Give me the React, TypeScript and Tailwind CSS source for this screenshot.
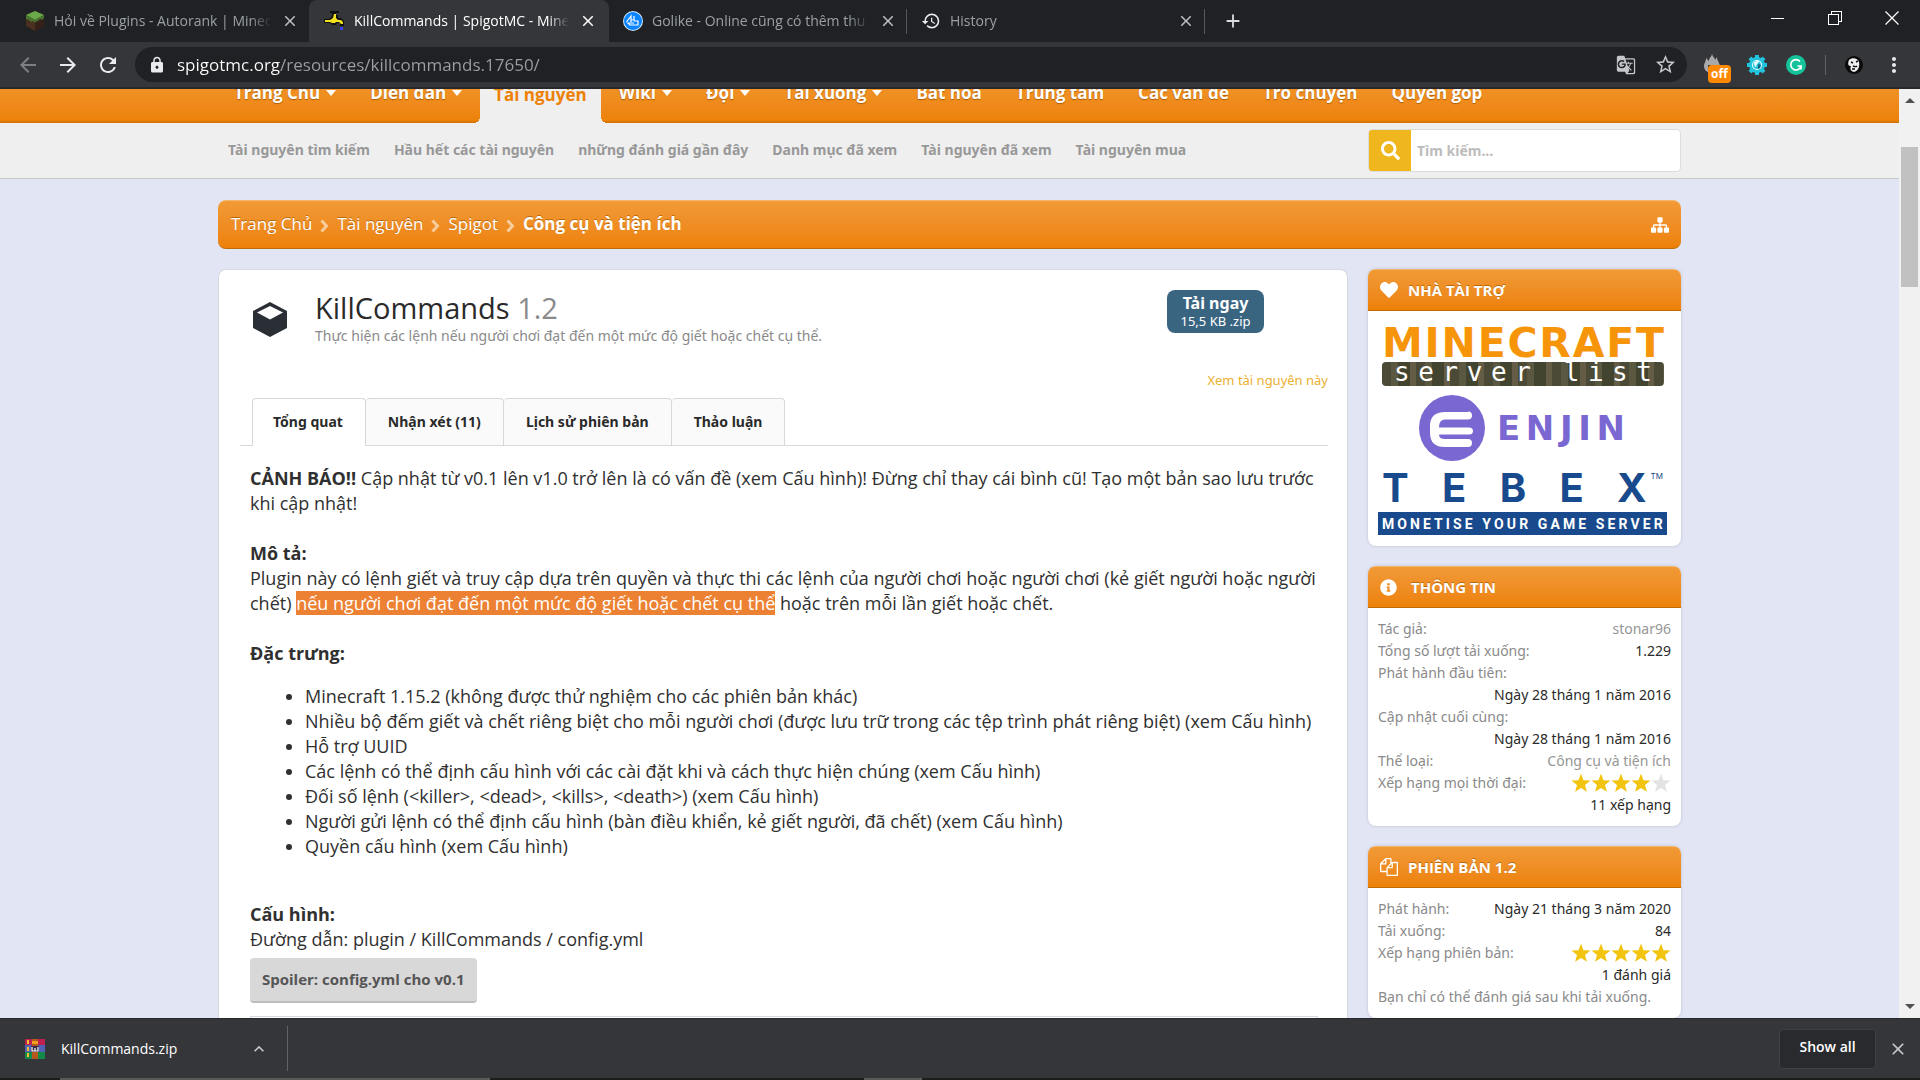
import type { ReactNode } from 'react';
import {
  MdAdd,
  MdArrowBack,
  MdArrowForward,
  MdClose,
  MdGTranslate,
  MdHistory,
  MdKeyboardArrowUp,
  MdLock,
  MdMoreVert,
  MdRefresh,
  MdStarBorder,
} from 'react-icons/md';
import { FaHeart, FaInfoCircle, FaSearch } from 'react-icons/fa';

const navItems = [
  { label: 'Trang Chủ', menu: true },
  { label: 'Diễn đàn', menu: true },
  { label: 'Tài nguyên', active: true },
  { label: 'Wiki', menu: true },
  { label: 'Đội', menu: true },
  { label: 'Tải xuống', menu: true },
  { label: 'Bất hòa' },
  { label: 'Trung tâm' },
  { label: 'Các vấn đề' },
  { label: 'Trò chuyện' },
  { label: 'Quyên góp' },
];

const subNav = [
  'Tài nguyên tìm kiếm',
  'Hầu hết các tài nguyên',
  'những đánh giá gần đây',
  'Danh mục đã xem',
  'Tài nguyên đã xem',
  'Tài nguyên mua',
];

const crumbs = ['Trang Chủ', 'Tài nguyên', 'Spigot'];

const resourceTabs = ['Tổng quat', 'Nhận xét (11)', 'Lịch sử phiên bản', 'Thảo luận'];

const features = [
  'Minecraft 1.15.2 (không được thử nghiệm cho các phiên bản khác)',
  'Nhiều bộ đếm giết và chết riêng biệt cho mỗi người chơi (được lưu trữ trong các tệp trình phát riêng biệt) (xem Cấu hình)',
  'Hỗ trợ UUID',
  'Các lệnh có thể định cấu hình với các cài đặt khi và cách thực hiện chúng (xem Cấu hình)',
  'Đối số lệnh (<killer>, <dead>, <kills>, <death>) (xem Cấu hình)',
  'Người gửi lệnh có thể định cấu hình (bàn điều khiển, kẻ giết người, đã chết) (xem Cấu hình)',
  'Quyền cấu hình (xem Cấu hình)',
];

/* ---------- small drawings ---------- */

const GrassBlock = () => (
  <svg viewBox="-1 0 20 20" className="size-5 shrink-0">
    <path d="M9 0 18 4v11l-9 5-9-5V4z" fill="#4a3020" />
    <path d="M9 9v11l9-5V4z" fill="#35211a" />
    <path d="M9 0 18 4 9 9 0 4z" fill="#6aa84a" />
    <path d="M0 4l9 5v3l-2-2-2 1-2-2-3-1zM18 4l-9 5v2l3-1 2-2 2 1 2-2z" fill="#47752f" />
  </svg>
);

const Faucet = () => (
  <svg viewBox="0 0 20 20" className="size-5 shrink-0">
    <path d="M6 0h9v2h-3v2h2v3h3l3 3v5h-4v-3h-3l-1 2H8l-2-2H0V8h5l3-3V2H6z" fill="#111" />
    <path d="M10 3h2v4l2 2h3l2 2v2h-2l-2-2h-3l-1 1H8l-2-1H1V9h5l3-2z" fill="#f0e020" />
    <path d="M16 16h3v3h-3z" fill="#3a41f0" />
  </svg>
);

const GolikeLogo = () => (
  <svg viewBox="0 0 20 20" className="size-5 shrink-0">
    <circle cx="10" cy="10" r="10" fill="#cfe6ff" />
    <circle cx="10" cy="10" r="9" fill="#0a84ff" />
    <path d="M3.500 11 8 5v6M8 9h3V5m0 5h4v4H7l-2-2h6" fill="none" stroke="#fff" strokeWidth="1.200" />
  </svg>
);

const FlameOff = () => (
  <span className="relative block h-6 w-6">
    <svg viewBox="0 0 16 20" className="h-5 w-4">
      <path d="M8 0c0 4 3 4 3 7l2-3c0 4 3 6 3 9 0 4-3 7-8 7s-8-3-8-7c0-3 2-4 2-8l3 3c0-4 3-4 3-8z" fill="#a9a9a9" />
      <path d="M4 12h3v4H4zM9 12h3v4H9z" fill="#35363a" />
    </svg>
    <span className="absolute top-3 left-1 rounded-sm bg-[#ff8800] px-[3px] text-xs leading-[18px] font-bold text-white">off</span>
  </span>
);

const GearGlobe = () => (
  <svg viewBox="0 0 20 20" className="size-5">
    <g fill="#22c3dc">
      <circle cx="10" cy="10" r="8" />
      <path d="M8 0h4v20H8zM0 8h20v4H0z" />
      <path d="M8 0h4v20H8zM0 8h20v4H0z" transform="rotate(45 10 10)" />
    </g>
    <circle cx="10" cy="10" r="4.500" fill="none" stroke="#e8fbff" strokeWidth="1.200" />
    <path d="M7 8c2-3 5-2 5-1l-2 2-1 3c-1 0-2-2-2-4z" fill="#e8fbff" />
    <path d="M11 9l3 1-1 3-2 1z" fill="#16637a" />
  </svg>
);

const Grammarly = () => (
  <svg viewBox="0 0 20 20" className="size-5">
    <circle cx="10" cy="10" r="10" fill="#15c39a" />
    <path d="M14 6.500A5.200 5.200 0 1 0 15 11h-3.500m3.500 0v3.500" fill="none" stroke="#fff" strokeWidth="1.700" />
  </svg>
);

const Avatar = () => (
  <svg viewBox="0 0 18 18" className="size-[18px]">
    <circle cx="9" cy="9" r="9" fill="#0a0a0a" />
    <path d="M4 4c3-3 9-2 10 2 1 5-1 9-5 10-4-1-4-4-3-6-2 0-4-1-2-6z" fill="#eee" />
    <path d="M6 6l2 1M11 6l2-1M8 10c2 1 3 1 4 0M7 13h3" fill="none" stroke="#111" strokeWidth="1.400" />
  </svg>
);

const WinRar = () => (
  <svg viewBox="0 0 20 20" className="size-5 shrink-0">
    <path d="M0 0h20v6H0z" fill="#c02050" />
    <path d="M0 6h20v7H0z" fill="#5560b8" />
    <path d="M0 13h20v7H0z" fill="#148a4a" />
    <path d="M2 1h2v4H2zM2 8h2v4H2zM2 14h2v4H2z" fill="#f0c030" />
    <path d="M7 0h6v20H7z" fill="#b5581c" />
    <path d="M7 2h6v3H7z" fill="#f0a020" />
    <path d="M6 7h8v6H6z" fill="#3a2a4a" />
    <path d="M7 8v4h6V8M10 9v3" stroke="#fff" fill="none" strokeWidth="1.200" />
  </svg>
);

const Cube = () => (
  <svg viewBox="0 0 34 40" className="h-10 w-[34px] shrink-0">
    <path d="M17 3 34 12v17l-17 9L0 29V12z" fill="#2a2e35" />
    <path d="M17 7 30 13.500 17 20.500 4 13.500z" fill="#fff" />
  </svg>
);

const Caret = () => (
  <svg viewBox="0 0 10 6" className="h-[6px] w-[10px] fill-current">
    <path d="M0 0h10L5 6z" />
  </svg>
);

const Sitemap = () => (
  <svg viewBox="0 0 1792 1792" className="size-[18px] fill-white">
    <path d="M1792 1248v320q0 40-28 68t-68 28h-320q-40 0-68-28t-28-68v-320q0-40 28-68t68-28h96v-192h-512v192h96q40 0 68 28t28 68v320q0 40-28 68t-68 28h-320q-40 0-68-28t-28-68v-320q0-40 28-68t68-28h96v-192h-512v192h96q40 0 68 28t28 68v320q0 40-28 68t-68 28h-320q-40 0-68-28t-28-68v-320q0-40 28-68t68-28h96v-192q0-52 38-90t90-38h512v-192h-96q-40 0-68-28t-28-68v-320q0-40 28-68t68-28h320q40 0 68 28t28 68v320q0 40-28 68t-68 28h-96v192h512q52 0 90 38t38 90v192h96q40 0 68 28t28 68z" />
  </svg>
);

const Files = () => (
  <svg viewBox="0 0 1792 1792" className="size-[18px] fill-white">
    <path d="M1696 384q40 0 68 28t28 68v1216q0 40-28 68t-68 28h-960q-40 0-68-28t-28-68v-288h-544q-40 0-68-28t-28-68v-672q0-40 20-88t48-76l408-408q28-28 76-48t88-20h416q40 0 68 28t28 68v328q68-40 128-40h416zm-544 213l-299 299h299v-299zm-640-384l-299 299h299v-299zm196 647l316-316v-416h-384v416q0 40-28 68t-68 28h-416v640h512v-256q0-40 20-88t48-76zm956 804v-1152h-384v416q0 40-28 68t-68 28h-416v640h896z" />
  </svg>
);

const Stars = ({ value }: { value: number }) => (
  <span className="flex">
    {[1, 2, 3, 4, 5].map((n) => (
      <svg key={n} viewBox="0 0 20 20" className={n <= value ? 'size-5 fill-[#f2c40f]' : 'size-5 fill-[#e3e3e3]'}>
        <path d="M10 .5l2.500 6.700 7 .3-5.500 4.400 1.900 6.900L10 14.900l-5.900 3.900L6 11.900.5 7.500l7-.3z" />
      </svg>
    ))}
  </span>
);

/* ---------- browser chrome ---------- */

type TabProps = { icon: ReactNode; title: string; active?: boolean; divider?: boolean };

const BrowserTab = ({ icon, title, active, divider }: TabProps) => (
  <div
    className={
      active
        ? 'flex h-[42px] w-[300px] items-center gap-[10px] rounded-t-lg bg-[#35363a] pr-3 pl-[15px] text-white'
        : 'flex h-[42px] w-[298px] items-center gap-[9px] pl-[14px] text-[#9aa0a6]'
    }
  >
    {icon}
    <span className="flex-1 overflow-hidden text-sm whitespace-nowrap [mask-image:linear-gradient(to_right,black_90%,transparent)]">
      {title}
    </span>
    <button aria-label="Close tab" className={active ? 'text-white' : 'text-[#bdc1c6]'}>
      <MdClose size={18} />
    </button>
    <span className={divider ? 'h-[25px] w-px bg-[#55585c]' : 'w-px'} hidden={active} />
  </div>
);

const TabStrip = () => (
  <div className="flex h-[42px] items-start bg-[#202124]">
    <div className="flex pl-[11px]">
      <BrowserTab icon={<GrassBlock />} title="Hỏi về Plugins - Autorank | Minecraft" />
      <BrowserTab icon={<Faucet />} title="KillCommands | SpigotMC - Minecraft" active />
      <BrowserTab icon={<GolikeLogo />} title="Golike - Online cũng có thêm thu nhập" divider />
      <BrowserTab icon={<MdHistory size={20} className="shrink-0 text-[#e8eaed]" />} title="History" divider />
    </div>
    <button aria-label="New tab" className="flex h-[42px] w-14 items-center justify-center text-[#dadce0]">
      <MdAdd size={22} />
    </button>
    <div className="ml-auto flex">
      <button aria-label="Minimize" className="flex h-9 w-[57px] items-center justify-center">
        <span className="h-px w-[13px] bg-white" />
      </button>
      <button aria-label="Restore" className="flex h-9 w-[57px] items-center justify-center">
        <svg viewBox="0 0 14 14" className="size-[14px]" fill="none" stroke="#fff" shapeRendering="crispEdges">
          <path d="M.5 3.500h10v10H.5zM3.500 3.500v-3h10v10h-3" />
        </svg>
      </button>
      <button aria-label="Close window" className="flex h-9 w-[57px] items-center justify-center">
        <svg viewBox="0 0 14 14" className="size-[14px]" fill="none" stroke="#fff" strokeWidth="1.200">
          <path d="M.5.5l13 13M13.500.5l-13 13" />
        </svg>
      </button>
    </div>
  </div>
);

const Toolbar = () => (
  <div className="flex h-[47px] items-center border-b-2 border-[#27282b] bg-[#35363a] pr-[18px] pl-4 text-[#e8eaed]">
    <div className="flex w-[119px] gap-4">
      <button aria-label="Back" className="text-[#7d7f83]">
        <MdArrowBack size={24} />
      </button>
      <button aria-label="Forward">
        <MdArrowForward size={24} />
      </button>
      <button aria-label="Reload">
        <MdRefresh size={24} />
      </button>
    </div>
    <div className="flex h-[35px] flex-1 items-center rounded-full bg-[#202124] pr-[10px] pl-[13px]">
      <MdLock size={18} className="shrink-0" />
      <label htmlFor="address" className="sr-only">
        Address
      </label>
      {/* the host is brighter than the path */}
      <input
        id="address"
        readOnly
        value="spigotmc.org/resources/killcommands.17650/"
        className="ml-[11px] min-w-0 flex-1 bg-[linear-gradient(to_right,#fff_103px,#9aa0a6_103px)] bg-clip-text text-[17px] leading-6 text-transparent outline-none"
      />
      <div className="flex gap-[18px] text-[#c4c7ca]">
        <button aria-label="Translate this page">
          <MdGTranslate size={20} />
        </button>
        <button aria-label="Bookmark this page">
          <MdStarBorder size={23} />
        </button>
      </div>
    </div>
    <div className="flex items-center gap-[19px] pl-[17px]">
      <button aria-label="Blocker extension">
        <FlameOff />
      </button>
      <button aria-label="Translate extension">
        <GearGlobe />
      </button>
      <button aria-label="Grammarly">
        <Grammarly />
      </button>
      <span className="h-5 w-px bg-[#5f6368]" />
      <button aria-label="Profile">
        <Avatar />
      </button>
      <button aria-label="Menu" className="w-5">
        <MdMoreVert size={24} />
      </button>
    </div>
  </div>
);

const Scrollbar = () => (
  <div className="flex w-[21px] shrink-0 flex-col items-center justify-between bg-[#f1f1f1] py-[9px]">
    <div className="flex flex-col items-center gap-[44px]">
      <span className="h-0 w-0 border-x-[5px] border-b-[5px] border-x-transparent border-b-[#505050]" />
      <span className="h-[140px] w-[17px] bg-[#c1c1c1]" />
    </div>
    <span className="h-0 w-0 border-x-[5px] border-t-[5px] border-x-transparent border-t-[#505050]" />
  </div>
);

const DownloadBar = () => (
  <footer className="shrink-0">
    <div className="flex h-[60px] items-center border-t border-[#27282b] bg-[#35363a] pr-3 text-sm text-white">
      <div className="flex h-[45px] w-[288px] items-center border-r border-[#5f6368] pr-[18px] pl-[25px]">
        <WinRar />
        <span className="ml-4 flex-1">KillCommands.zip</span>
        <button aria-label="Download options" className="text-[#c4c7ca]">
          <MdKeyboardArrowUp size={20} />
        </button>
      </div>
      <button className="ml-auto h-10 w-[97px] rounded-[4px] border border-[#3f4044] bg-[#292a2d] pb-1 font-semibold">Show all</button>
      <button aria-label="Close downloads bar" className="ml-3 text-[#c4c7ca]">
        <MdClose size={20} />
      </button>
    </div>
    <div className="flex h-[2px] bg-[#1c1c1c] pl-[60px]">
      <span className="w-[430px] bg-[#5a5a5a]" />
      <span className="ml-[374px] w-[58px] bg-[#5a5a5a]" />
    </div>
  </footer>
);

/* ---------- site ---------- */

const SiteHeader = () => (
  <header>
    <nav className="h-[34px] overflow-hidden bg-linear-to-b from-[#f09125] to-[#ed8106] shadow-[inset_0_-2px_0_#d87704]">
      <div className="mx-auto flex w-full max-w-[1463px] items-start gap-[2px] font-['Open_Sans']">
        {navItems.map((item) =>
          item.active ? (
            <a
              key={item.label}
              href="#"
              className="relative -mt-2 h-[42px] bg-[#efefef] px-[14px] text-[17px] leading-7 font-bold text-[#ed8106] before:absolute before:bottom-0 before:-left-[6px] before:size-[6px] before:bg-[radial-gradient(circle_at_top_left,transparent_6px,#efefef_6px)] after:absolute after:-right-[6px] after:bottom-0 after:size-[6px] after:bg-[radial-gradient(circle_at_top_right,transparent_6px,#efefef_6px)]"
            >
              {item.label}
            </a>
          ) : (
            <a
              key={item.label}
              href="#"
              className="-mt-2 flex items-center gap-[6px] px-4 text-[17px] leading-6 font-bold text-white [text-shadow:0_1px_1px_#a85c04]"
            >
              {item.label}
              {item.menu && <Caret />}
            </a>
          ),
        )}
      </div>
    </nav>
    <div className="border-b border-[#c8c8c8] bg-[#efefef]">
      <div className="mx-auto flex h-[55px] w-full max-w-[1463px] items-center justify-between">
        <div className="flex gap-6 pb-[2px] pl-[10px]">
          {subNav.map((label) => (
            <a key={label} href="#" className="text-sm font-bold text-[#989898]">
              {label}
            </a>
          ))}
        </div>
        <form className="flex h-[43px] w-[313px] overflow-hidden rounded-[4px] border border-[#dcdcdc] bg-white">
          <button type="button" aria-label="Tìm kiếm" className="flex w-[42px] items-center justify-center bg-[#efb71d] text-white">
            <FaSearch size={19} />
          </button>
          <input
            type="search"
            aria-label="Tìm kiếm"
            placeholder="Tìm kiếm..."
            className="min-w-0 flex-1 px-[6px] text-sm font-bold outline-none placeholder:text-[#bcbcbc]"
          />
        </form>
      </div>
    </div>
  </header>
);

const Breadcrumb = () => (
  <div className="flex h-[49px] items-center justify-between rounded-lg border-t border-b border-t-[#f6b56c] border-b-[#c06a04] bg-linear-to-b from-[#f19a36] to-[#ed8106] pr-3 pl-[13px] text-white">
    <div className="flex items-center pb-[2px] font-['Open_Sans'] text-[17px] [text-shadow:0_-1px_0_#b9690c]">
      {crumbs.map((crumb) => (
        <span key={crumb} className="flex items-center">
          <a href="#">{crumb}</a>
          <svg viewBox="0 0 9 14" className="mx-2 mt-1 h-[14px] w-[9px]" fill="none" stroke="#f9cd9a" strokeWidth="3">
            <path d="M1.500 1.500 6.500 7l-5 5.500" />
          </svg>
        </span>
      ))}
      <a href="#" className="font-bold">
        Công cụ và tiện ích
      </a>
    </div>
    <button aria-label="Mở điều hướng nhanh">
      <Sitemap />
    </button>
  </div>
);

const Resource = () => (
  <main className="min-w-0 flex-1 rounded-t-lg border border-b-0 border-[#d6d8e0] bg-white pr-[19px] pl-[21px]">
    <div className="flex items-start pl-[13px]">
      <div className="mt-[29px]">
        <Cube />
      </div>
      <div className="mt-5 ml-[28px] flex-1">
        <h1 className="font-['Open_Sans'] text-[29px] leading-9 text-[#2a2a2a]">
          KillCommands <span className="text-[#8a8a8a]">1.2</span>
        </h1>
        <p className="text-sm leading-5 text-[#8a8a8a]">Thực hiện các lệnh nếu người chơi đạt đến một mức độ giết hoặc chết cụ thể.</p>
      </div>
      <button className="mt-5 mr-16 h-[43px] w-[97px] rounded-lg bg-[#3a6581] pb-[2px] text-white">
        <span className="block text-base leading-5 font-bold">Tải ngay</span>
        <span className="block text-[13px] leading-4">15,5 KB .zip</span>
      </button>
    </div>
    <div className="mt-6 text-right text-[13px] leading-5">
      <a href="#" className="text-[#eab030]">
        Xem tài nguyên này
      </a>
    </div>
    <div className="mt-2 flex border-b border-[#d6d8dc] pl-3">
      {resourceTabs.map((tab, i) => (
        <a
          key={tab}
          href="#"
          className={
            i === 0
              ? '-mb-px rounded-t-[4px] border border-b-0 border-[#d6d8dc] bg-white pr-[22px] pl-5 text-sm leading-[46px] font-bold text-[#2a2a2a]'
              : 'rounded-t-[4px] border border-b-0 border-l-0 border-[#d6d8dc] bg-[#fafafa] px-[22px] text-sm leading-[46px] font-bold text-[#2a2a2a]'
          }
        >
          {tab}
        </a>
      ))}
    </div>
    <article className="pt-5 pr-[2px] pl-[10px] font-['Open_Sans'] text-lg leading-[25px] text-[#303030]">
      <p>
        <b>CẢNH BÁO!!</b> Cập nhật từ v0.1 lên v1.0 trở lên là có vấn đề (xem Cấu hình)! Đừng chỉ thay cái bình cũ! Tạo một bản sao lưu
        trước khi cập nhật!
      </p>
      <h2 className="mt-[25px] font-bold">Mô tả:</h2>
      <p>
        Plugin này có lệnh giết và truy cập dựa trên quyền và thực thi các lệnh của người chơi hoặc người chơi (kẻ giết người hoặc người
        chết) <mark className="bg-[#ed8133] text-white">nếu người chơi đạt đến một mức độ giết hoặc chết cụ thể</mark> hoặc trên mỗi lần
        giết hoặc chết.
      </p>
      <h2 className="mt-[25px] font-bold">Đặc trưng:</h2>
      <ul className="mt-[18px] list-disc pl-[55px]">
        {features.map((feature) => (
          <li key={feature}>{feature}</li>
        ))}
      </ul>
      <h2 className="mt-[43px] font-bold">Cấu hình:</h2>
      <p>Đường dẫn: plugin / KillCommands / config.yml</p>
      <button className="mt-[6px] block h-[45px] rounded-[4px] border-b-2 border-[#bdbdbd] bg-[#d8d8d8] px-3 text-[15px] font-bold text-[#555]">
        Spoiler: config.yml cho v0.1
      </button>
      <div className="mt-[13px] mr-2 h-10 border border-[#d6d8dc]" />
    </article>
  </main>
);

const SideCard = ({ icon, title, children }: { icon: ReactNode; title: string; children: ReactNode }) => (
  <section className="overflow-hidden rounded-lg bg-white shadow-[0_0_3px_#b8bccb]">
    <h3 className="flex h-[42px] items-center gap-[10px] border-t border-b border-t-[#f6b56c] border-b-[#c06a04] bg-linear-to-b from-[#f19a36] to-[#ed8106] px-3 font-['Open_Sans'] text-[15px] font-bold text-white uppercase [text-shadow:0_-1px_0_#b9690c]">
      {icon}
      {title}
    </h3>
    {children}
  </section>
);

const StatRow = ({ label, value, muted }: { label?: string; value?: ReactNode; muted?: boolean }) => (
  <div className="flex h-[22px] items-center justify-between">
    <dt className="text-[#8a8a8a]">{label}</dt>
    <dd className={muted ? 'text-[#969696]' : 'text-[#2a2a2a]'}>{value}</dd>
  </div>
);

// wordmark whose letters are spread over the width of its box
const Wordmark = ({ text, className }: { text: string; className: string }) => (
  <span className={`flex justify-between ${className}`}>
    {text.split('').map((char, i) => (
      <span key={i} className="whitespace-pre">
        {char}
      </span>
    ))}
  </span>
);

const Sponsors = () => (
  <div className="flex flex-col pt-4 pr-[14px] pb-[11px] pl-[10px]">
    <a href="#" className="block pr-[3px] pl-1">
      <Wordmark text="MINECRAFT" className="font-['DejaVu_Sans'] text-[41px] leading-8 font-bold text-[#f7950a]" />
      <Wordmark
        text="server list"
        className="mt-[3px] h-6 rounded-[4px] bg-[repeating-linear-gradient(90deg,#4a4a36_0_9px,#5b5841_9px_16px,#43442f_16px_28px,#645c45_28px_34px)] px-3 font-['DejaVu_Sans_Mono'] text-[26px] leading-5 text-white"
      />
    </a>
    <a href="#" className="mt-[9px] flex items-center gap-3 pl-[41px]">
      <svg viewBox="0 0 66 66" className="size-[66px]">
        <circle cx="33" cy="33" r="33" fill="#7a67d2" />
        <path
          d="M49 17H26q-15 0-15 14v7q0 14 15 14h23q4 0 4-4t-4-4H26q-6 0-6-4.500h30q4 0 4-3.500t-4-3.500H20q0-8 6-8h23q4 0 4-4t-4-4z"
          fill="#fff"
        />
      </svg>
      <Wordmark text="ENJIN" className="w-[128px] font-['DejaVu_Sans'] text-[34px] leading-8 font-bold text-[#7a67d2]" />
    </a>
    <a href="#" className="mt-[7px] block">
      <span className="flex items-start gap-1 pr-1 pl-1 text-[#194a8d]">
        <Wordmark text="TEBEX" className="flex-1 font-[Inter] text-[40px] leading-10 font-bold" />
        <span className="font-[Inter] text-[8px] leading-4">TM</span>
      </span>
      <Wordmark
        text="MONETISE YOUR GAME SERVER"
        className="mt-1 h-[23px] bg-[#194a8d] px-1 font-[Roboto] text-sm leading-6 font-bold text-white"
      />
    </a>
  </div>
);

const Sidebar = () => (
  <aside className="flex w-[313px] shrink-0 flex-col gap-5">
    <SideCard icon={<FaHeart size={18} />} title="Nhà tài trợ">
      <Sponsors />
    </SideCard>
    <SideCard icon={<FaInfoCircle size={17} className="mr-1" />} title="Thông tin">
      <dl className="p-[10px] text-sm">
        <StatRow label="Tác giả:" value={<a href="#">stonar96</a>} muted />
        <StatRow label="Tổng số lượt tải xuống:" value="1.229" />
        <StatRow label="Phát hành đầu tiên:" />
        <StatRow value="Ngày 28 tháng 1 năm 2016" />
        <StatRow label="Cập nhật cuối cùng:" />
        <StatRow value="Ngày 28 tháng 1 năm 2016" />
        <StatRow label="Thể loại:" value={<a href="#">Công cụ và tiện ích</a>} muted />
        <StatRow label="Xếp hạng mọi thời đại:" value={<Stars value={4} />} />
        <StatRow value="11 xếp hạng" />
      </dl>
    </SideCard>
    <SideCard icon={<Files />} title="Phiên bản 1.2">
      <dl className="p-[10px] text-sm">
        <StatRow label="Phát hành:" value="Ngày 21 tháng 3 năm 2020" />
        <StatRow label="Tải xuống:" value="84" />
        <StatRow label="Xếp hạng phiên bản:" value={<Stars value={5} />} />
        <StatRow value="1 đánh giá" />
        <StatRow label="Bạn chỉ có thể đánh giá sau khi tải xuống." />
      </dl>
    </SideCard>
  </aside>
);

export default function App() {
  return (
    <div className="flex h-screen flex-col overflow-hidden font-['Open_Sans','Noto_Sans',sans-serif]">
      <TabStrip />
      <Toolbar />
      <div className="flex min-h-0 flex-1 overflow-hidden bg-[#e1e5f4] font-['Noto_Sans','Open_Sans',sans-serif]">
        <div className="min-w-0 flex-1 overflow-hidden">
          <SiteHeader />
          <div className="mx-auto w-full max-w-[1463px] pt-[21px]">
            <Breadcrumb />
            <div className="mt-5 flex gap-5">
              <Resource />
              <Sidebar />
            </div>
          </div>
        </div>
        <Scrollbar />
      </div>
      <DownloadBar />
    </div>
  );
}
